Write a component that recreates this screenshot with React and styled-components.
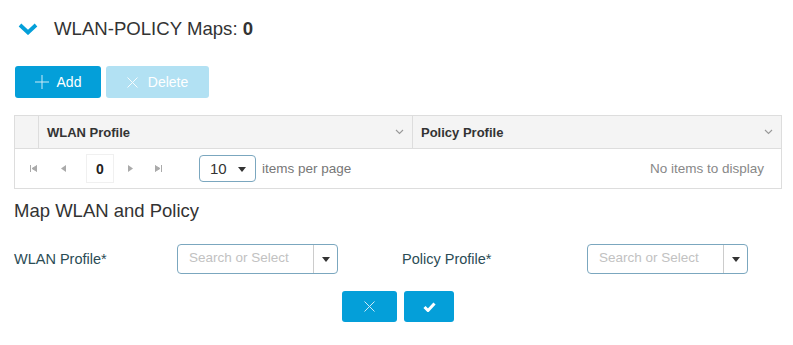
import React from "react";
import styled, { createGlobalStyle } from "styled-components";

const Global = createGlobalStyle`
  body {
    margin: 0;
    background: #fff;
    font-family: "Liberation Sans", Arial, sans-serif;
    color: #333;
  }
`;

const Page = styled.div`
  padding: 0 12px 0 14px;
  width: 768px;
`;

const Header = styled.div`
  display: flex;
  align-items: center;
  height: 58px;
  padding-left: 4px;
  gap: 16px;
`;

const Title = styled.h2`
  margin: 0;
  font-size: 18.6px;
  font-weight: normal;
  color: #333;
  b {
    font-weight: bold;
  }
`;

const Toolbar = styled.div`
  display: flex;
  gap: 5px;
  padding: 8px 0 0 1px;
  height: 32px;
`;

const ActionButton = styled.button`
  display: flex;
  align-items: center;
  justify-content: center;
  gap: ${({ gap }) => gap}px;
  width: ${({ w }) => w}px;
  height: 32px;
  border: none;
  border-radius: 3px;
  background: ${({ disabled }) => (disabled ? "#b2e1f3" : "#049fd9")};
  color: #fff;
  font-family: inherit;
  font-size: 14px;
  padding: 0;
  svg {
    opacity: ${({ disabled }) => (disabled ? 0.9 : 0.8)};
  }
`;

const Grid = styled.div`
  margin-top: 17px;
  border: 1px solid #ddd;
  width: 766px;
`;

const HeadRow = styled.div`
  display: grid;
  grid-template-columns: 23px 374px 1fr;
  height: 32px;
  background: #f4f4f4;
  border-bottom: 1px solid #ddd;
`;

const HeadCell = styled.div`
  display: flex;
  align-items: center;
  justify-content: space-between;
  padding: 0 8px 0 8px;
  font-size: 13px;
  font-weight: bold;
  color: #333;
  border-left: ${({ first }) => (first ? "none" : "1px solid #ddd")};
`;

const Pager = styled.div`
  display: flex;
  align-items: center;
  height: 39px;
  padding: 0 17px 0 3px;
  font-size: 13.5px;
`;

const PagerIcon = styled.span`
  display: flex;
  align-items: center;
  justify-content: center;
  width: ${({ w }) => w || 28}px;
  color: #aaa;
`;

const PageNum = styled.div`
  width: 28px;
  height: 29px;
  display: flex;
  align-items: center;
  justify-content: center;
  font-weight: bold;
  font-size: 14px;
  color: #222;
  border: 1px solid #f0f0f0;
  box-sizing: border-box;
  margin: 0 2px 0 8px;
`;

const SizeSelect = styled.div`
  margin-left: 27px;
  width: 57px;
  height: 27px;
  border: 1px solid #7ba7bf;
  border-radius: 4px;
  display: flex;
  align-items: center;
  justify-content: space-between;
  padding: 0 9px 0 10px;
  box-sizing: border-box;
  font-size: 15px;
  color: #333;
`;

const PerPage = styled.span`
  margin-left: 6px;
  color: #777;
`;

const Empty = styled.span`
  margin-left: auto;
  color: #888;
`;

const SubTitle = styled.div`
  font-size: 18.5px;
  color: #333;
  margin-top: 11px;
`;

const FormRow = styled.div`
  display: grid;
  grid-template-columns: 163px 225px 185px 161px;
  align-items: center;
  margin-top: 22px;
`;

const Label = styled.div`
  font-size: 14.5px;
  color: #2b4c55;
`;

const Combo = styled.div`
  width: 161px;
  height: 30px;
  box-sizing: border-box;
  border: 1px solid #7ba7bf;
  border-radius: 4px;
  display: flex;
`;

const ComboInput = styled.div`
  flex: 1;
  display: flex;
  align-items: center;
  padding-left: 11px;
  font-size: 13.5px;
  color: #c2c2c2;
  margin-top: -3px;
`;

const ComboArrow = styled.div`
  width: 23px;
  border-left: 1px solid #ccc;
  display: flex;
  align-items: center;
  justify-content: center;
`;

const Footer = styled.div`
  display: flex;
  gap: 7px;
  margin-top: 17px;
  padding-left: 328px;
`;

const FooterButton = styled.button`
  width: ${({ w }) => w}px;
  height: 31px;
  border: none;
  border-radius: 3px;
  background: #049fd9;
  display: flex;
  align-items: center;
  justify-content: center;
  padding: 0;
`;

const Caret = () => (
  <svg width="8" height="6" viewBox="0 0 8 6">
    <path d="M0 1h8L4 6z" fill="#333" />
  </svg>
);

const SmallChevron = () => (
  <svg width="9" height="6" viewBox="0 0 9 6">
    <path d="M1 1l3.5 3.5L8 1" fill="none" stroke="#999" strokeWidth="1.1" />
  </svg>
);

const Combobox = () => (
  <Combo>
    <ComboInput>Search or Select</ComboInput>
    <ComboArrow>
      <Caret />
    </ComboArrow>
  </Combo>
);

export default function App() {
  return (
    <Page>
      <Global />
      <Header>
        <svg width="20" height="12" viewBox="0 0 20 12">
          <path d="M2 2l8 7.5L18 2" fill="none" stroke="#049fd9" strokeWidth="3.8" />
        </svg>
        <Title>
          WLAN-POLICY Maps: <b>0</b>
        </Title>
      </Header>
      <Toolbar>
        <ActionButton w={86} gap={8}>
          <svg width="14" height="14" viewBox="0 0 14 14">
            <path d="M7 0v14M0 7h14" stroke="#fff" strokeWidth="1" />
          </svg>
          Add
        </ActionButton>
        <ActionButton w={103} gap={10} disabled>
          <svg width="11" height="11" viewBox="0 0 11 11">
            <path d="M0.5 0.5l10 10M10.5 0.5l-10 10" stroke="#fff" strokeWidth="1" />
          </svg>
          Delete
        </ActionButton>
      </Toolbar>
      <Grid>
        <HeadRow>
          <HeadCell first />
          <HeadCell>
            WLAN Profile
            <SmallChevron />
          </HeadCell>
          <HeadCell>
            Policy Profile
            <SmallChevron />
          </HeadCell>
        </HeadRow>
        <Pager>
          <PagerIcon w={30}>
            <svg width="7" height="7" viewBox="0 0 7 7">
              <path d="M0.5 0v7M7 0.5v6L2 3.5z" stroke="#aaa" strokeWidth="1" fill="#aaa" />
            </svg>
          </PagerIcon>
          <PagerIcon w={30}>
            <svg width="5" height="7" viewBox="0 0 5 7">
              <path d="M5 0v7L0 3.5z" fill="#aaa" />
            </svg>
          </PagerIcon>
          <PageNum>0</PageNum>
          <PagerIcon>
            <svg width="5" height="7" viewBox="0 0 5 7">
              <path d="M0 0v7L5 3.5z" fill="#aaa" />
            </svg>
          </PagerIcon>
          <PagerIcon>
            <svg width="7" height="7" viewBox="0 0 7 7">
              <path d="M6.5 0v7M0 0.5v6L5 3.5z" stroke="#aaa" strokeWidth="1" fill="#aaa" />
            </svg>
          </PagerIcon>
          <SizeSelect>
            10
            <Caret />
          </SizeSelect>
          <PerPage>items per page</PerPage>
          <Empty>No items to display</Empty>
        </Pager>
      </Grid>
      <SubTitle>Map WLAN and Policy</SubTitle>
      <FormRow>
        <Label>WLAN Profile*</Label>
        <Combobox />
        <Label>Policy Profile*</Label>
        <Combobox />
      </FormRow>
      <Footer>
        <FooterButton w={55}>
          <svg width="11" height="11" viewBox="0 0 11 11">
            <path d="M0.5 0.5l10 10M10.5 0.5l-10 10" stroke="#cdeaf7" strokeWidth="1" />
          </svg>
        </FooterButton>
        <FooterButton w={50}>
          <svg width="13" height="10" viewBox="0 0 13 10">
            <path d="M1.5 5l3.5 3.5L11.5 1.5" fill="none" stroke="#fff" strokeWidth="3" />
          </svg>
        </FooterButton>
      </Footer>
    </Page>
  );
}
